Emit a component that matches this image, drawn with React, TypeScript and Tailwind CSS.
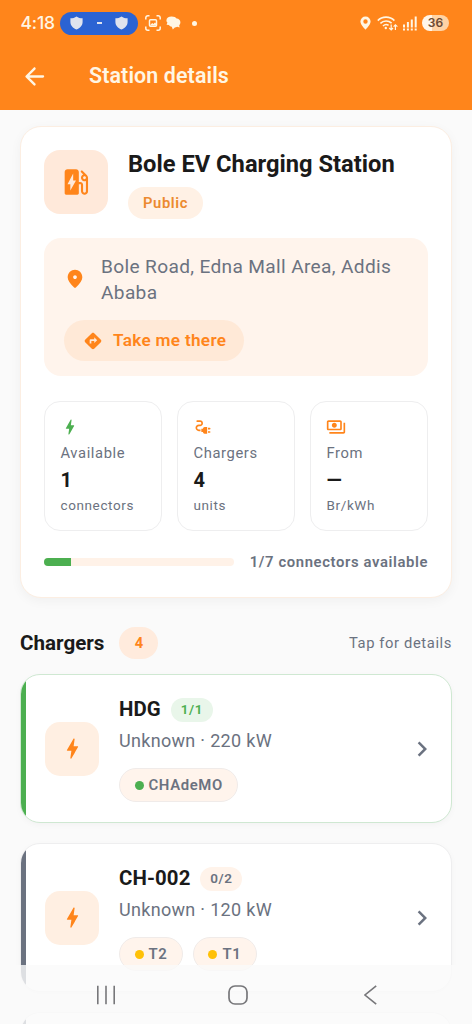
import type { ReactNode } from "react";
import { MdChevronRight, MdDirections, MdElectricalServices, MdOutlinePayments } from "react-icons/md";

type Connector = { name: string; dot: string };

type Charger = {
  name: string;
  free: string;
  info: string;
  active: boolean;
  connectors: Connector[];
};

const chargers: Charger[] = [
  {
    name: "HDG",
    free: "1/1",
    info: "Unknown · 220 kW",
    active: true,
    connectors: [{ name: "CHAdeMO", dot: "bg-[#4caf50]" }],
  },
  {
    name: "CH-002",
    free: "0/2",
    info: "Unknown · 120 kW",
    active: false,
    connectors: [
      { name: "T2", dot: "bg-[#ffc107]" },
      { name: "T1", dot: "bg-[#ffc107]" },
    ],
  },
];

// Rounded Material glyphs, on the usual 24px grid
const glyphs = {
  back: "M19 11H7.83l4.88-4.88c.39-.39.39-1.03 0-1.42-.39-.39-1.02-.39-1.41 0l-6.59 6.59c-.39.39-.39 1.02 0 1.41l6.59 6.59c.39.39 1.02.39 1.41 0 .39-.39.39-1.02 0-1.41L7.83 13H19c.55 0 1-.45 1-1s-.45-1-1-1z",
  bolt: "M10.67 21c-.35 0-.62-.31-.57-.66L11 14H7.5c-.88 0-.33-.75-.31-.78 1.26-2.23 3.15-5.53 5.65-9.93.1-.18.3-.29.5-.29.35 0 .63.31.57.66L13.01 10h3.51c.4 0 .62.19.4.66-3.29 5.74-5.2 9.09-5.75 10.05-.1.18-.29.29-.5.29z",
  station:
    "M19.77 7.23l.01-.01-3.19-3.19c-.29-.29-.77-.29-1.06 0-.29.29-.29.77 0 1.06l1.58 1.58c-1.05.4-1.76 1.47-1.58 2.71.16 1.1 1.1 1.99 2.2 2.11.47.05.88-.03 1.27-.2v7.21c0 .55-.45 1-1 1s-1-.45-1-1V14c0-1.1-.9-2-2-2h-1V5c0-1.1-.9-2-2-2H6c-1.1 0-2 .9-2 2v15c0 .55.45 1 1 1h8c.55 0 1-.45 1-1v-6.5h1.5v4.86c0 1.31.94 2.5 2.24 2.63 1.5.15 2.76-1.02 2.76-2.49V9c0-.69-.28-1.32-.73-1.77zM18 10c-.55 0-1-.45-1-1s.45-1 1-1 1 .45 1 1-.45 1-1 1zM8 18v-4.5H6L10 6v5h2l-4 7z",
  pin: "M12 2c-4.2 0-8 3.22-8 8.2 0 3.18 2.45 6.92 7.34 11.23.38.33.95.33 1.33 0C17.55 17.12 20 13.38 20 10.2 20 5.22 16.2 2 12 2zm0 10c-1.1 0-2-.9-2-2s.9-2 2-2 2 .9 2 2-.9 2-2 2z",
};

function Glyph({ name, size, className }: { name: keyof typeof glyphs; size: number; className?: string }) {
  return (
    <svg width={size} height={size} viewBox="0 0 24 24" fill="currentColor" fillRule="evenodd" className={className}>
      <path d={glyphs[name]} />
    </svg>
  );
}

function Shield() {
  return (
    <svg width="13" height="14" viewBox="0 0 13 14" fill="#dfe3ee">
      <path d="M6.5 0.4C8.2 1.7 10.2 2.2 12.6 2.3V6C12.6 9.6 10 12.2 6.5 13.6C3 12.2 0.4 9.6 0.4 6V2.3C2.8 2.2 4.8 1.7 6.5 0.4Z" />
    </svg>
  );
}

function StatusBar() {
  return (
    <div className="flex h-[46px] items-center pl-[20.5px] pr-[23px] text-[#fff6e4]">
      <span className="w-[39.5px] whitespace-nowrap font-['Inter'] text-[17.5px] font-medium leading-5 tracking-[-0.2px]">
        4:18
      </span>
      <div className="flex h-[23px] w-[78px] items-center justify-between rounded-full bg-[#2b63d3] px-[10px]">
        <Shield />
        <span className="h-[1.5px] w-[5px] bg-[#dfe3ee]" />
        <Shield />
      </div>
      <svg className="ml-[7px]" width="16" height="16" viewBox="0 0 16 16" fill="none" stroke="currentColor" strokeWidth="1.5">
        <path d="M0.8 4.5V2.8a2 2 0 0 1 2-2H4.5M11.5 0.8h1.7a2 2 0 0 1 2 2V4.5M15.2 11.5v1.7a2 2 0 0 1-2 2H11.5M4.5 15.2H2.8a2 2 0 0 1-2-2V11.5" />
        <rect x="4.5" y="4.8" width="7" height="6.4" rx="1" />
        <path d="M5 10.3L7.2 8L8.4 9L10 7.6L11 8.6V10.6H5Z" fill="currentColor" stroke="none" />
      </svg>
      <svg className="ml-[5px]" width="15" height="14" viewBox="0 0 15 14" fill="currentColor">
        <path d="M5.6 0.4C8.2 0.4 9.8 1.3 10.6 2.6C12.8 2.8 14.4 4.2 14.4 6.2C14.4 7.6 13.8 8.4 13.2 9.2L13.6 11.6L11.2 10.8C10.4 11.2 9.6 11.4 8.8 11.4L6.8 13.6L5.8 10.8C4.6 10.6 3.6 10 3 9L0.6 8.8L1.4 6.6C0.8 6 0.4 5.2 0.4 4.4C0.4 2 2.6 0.4 5.6 0.4Z" />
      </svg>
      <span className="ml-[11px] size-[5px] rounded-full bg-current" />

      <div className="ml-auto flex items-center">
        <svg width="11" height="14" viewBox="0 0 11 14" fill="currentColor" fillRule="evenodd">
          <path d="M5.5 0.4A5.1 5.1 0 0 0 0.4 5.5C0.4 9 5.5 13.6 5.5 13.6S10.6 9 10.6 5.5A5.1 5.1 0 0 0 5.5 0.4ZM5.5 3.3A2.2 2.2 0 1 1 5.5 7.7A2.2 2.2 0 0 1 5.5 3.3Z" />
        </svg>
        <svg className="ml-[6px]" width="21" height="15" viewBox="0 0 21 15" fill="none" stroke="currentColor" strokeWidth="1.6">
          <path d="M0.8 4.6C5.2 0 12.8 0 17.4 4.6M3.4 7.4C6.6 4.2 11.4 4.2 14.6 7.2M6 10C7.8 8.2 10 8.2 11.6 9.4" />
          <circle cx="8.8" cy="12" r="1.2" fill="currentColor" stroke="none" />
          <path d="M14.2 8.4V13.8M12.2 12L14.2 14L16 12M18.4 14V8.8M16.6 10.6L18.4 8.8L20.4 10.6" strokeWidth="1.2" />
        </svg>
        <svg className="ml-[5px]" width="14" height="15" viewBox="0 0 14 15" fill="currentColor">
          <path d="M0 8.5h2v3h-2zM3.9 6h2v5.5h-2zM7.8 3.5h2v8h-2zM11.7 0.5h2v11h-2zM0 12.6h2v2h-2zM3.9 12.6h2v2h-2zM7.8 12.6h2v2h-2zM11.7 12.6h2v2h-2z" />
        </svg>
        <span className="ml-[5px] flex h-4 w-[27px] items-center justify-center rounded-full bg-[linear-gradient(90deg,#fff6ea_36%,#ffd3a5_36%)] font-['Inter'] text-[12px] font-semibold leading-4 text-[#6b4a35]">
          36
        </span>
      </div>
    </div>
  );
}

function StatCard({ icon, label, value, unit }: { icon: ReactNode; label: string; value: string; unit: string }) {
  return (
    <div className="h-[130px] rounded-2xl border border-[#eeeeef] bg-white pl-[15.5px] pt-[15px]">
      <div className="h-[22px]">{icon}</div>
      <p className="h-[28px] text-[14.75px] leading-[28px] tracking-[0.61px] text-[#6b7280]">{label}</p>
      <p className="h-[25px] text-[20px] font-bold leading-[27px] text-[#1a1a1a]">{value}</p>
      <p className="text-[13.5px] leading-[26px] tracking-[0.61px] text-[#6b7280]">{unit}</p>
    </div>
  );
}

function ChargerCard({ charger }: { charger: Charger }) {
  const { name, free, info, active, connectors } = charger;
  return (
    <div
      className={`relative flex h-[149px] shrink-0 items-center overflow-hidden rounded-[20px] border bg-white pl-[24px] pr-[14px] shadow-[0_2px_6px_rgba(0,0,0,0.03)] ${
        active ? "border-[#cfe8d2]" : "border-[#eeeeef]"
      }`}
    >
      <span className={`absolute -left-px inset-y-0 w-[6px] ${active ? "bg-[#4caf50]" : "bg-[#6b7280]"}`} />
      <div className="flex size-[54px] items-center justify-center rounded-[15px] bg-[#ffefe2]">
        <Glyph name="bolt" size={27} className="text-[#ff851b]" />
      </div>
      <div className="ml-5 flex h-full flex-1 flex-col pt-[22px]">
        <div className="flex h-6 items-center gap-[10px]">
          <span className="text-[20.4px] font-bold leading-6 tracking-[0.1px] text-[#1a1a1a]">{name}</span>
          <span
            className={`mt-px flex h-6 w-[42px] items-center justify-center rounded-full text-[13.5px] font-semibold tracking-[0.61px] ${
              active ? "bg-[#e9f6ea] text-[#4caf50]" : "bg-[#fff3ea] text-[#6b7280]"
            }`}
          >
            {free}
          </span>
        </div>
        <p className="mt-[7px] h-[26px] text-[18px] leading-[26px] tracking-[0.31px] text-[#6b7280]">{info}</p>
        <div className="mt-[14px] flex gap-[10px]">
          {connectors.map((c) => (
            <span
              key={c.name}
              className="flex h-[34px] items-center rounded-full border border-[#f0ebe9] bg-[#fff4ec] px-[14.5px] text-[14.9px] font-semibold tracking-[0.61px] text-[#6b7280]"
            >
              <i className={`mr-[5px] size-[9px] rounded-full ${c.dot}`} />
              {c.name}
            </span>
          ))}
        </div>
      </div>
      <MdChevronRight size={30} className="text-[#6b7280]" />
    </div>
  );
}

export default function App() {
  return (
    <div className="relative flex h-[1024px] w-[472px] flex-col overflow-hidden bg-[#fafafa] font-['Roboto',sans-serif]">
      <header className="h-[110px] shrink-0 bg-[#ff851b]">
        <StatusBar />
        <div className="flex h-[60px] items-center pl-5 text-[#fff6e4]">
          <Glyph name="back" size={29} />
          <h1 className="ml-10 text-[21.4px] font-semibold tracking-[0.12px]">Station details</h1>
        </div>
      </header>

      <main className="flex flex-col px-5 pt-4">
        <section className="h-[472px] shrink-0 rounded-[21px] border border-[#fceee2] bg-white px-[23px] pt-[23px] shadow-[0_3px_12px_rgba(0,0,0,0.045)]">
          <div className="flex gap-5">
            <div className="flex size-16 items-center justify-center rounded-2xl bg-[#ffe9da]">
              <Glyph name="station" size={34} className="text-[#ff851b]" />
            </div>
            <div>
              <h2 className="h-[37px] whitespace-nowrap text-[23.7px] font-bold leading-[28px] text-[#1a1a1a]">
                Bole EV Charging Station
              </h2>
              <span className="flex h-8 w-[75px] items-center justify-center rounded-full bg-[#fff1e5] text-[14.75px] font-semibold tracking-[0.61px] text-[#ec8a2f]">
                Public
              </span>
            </div>
          </div>

          <div className="mt-[19px] h-[138px] rounded-[17px] bg-[#fff4ec] pl-5 pt-4">
            <div className="flex items-center gap-[15px]">
              <Glyph name="pin" size={22} className="mb-[2px] text-[#ff851b]" />
              <p className="w-[305px] text-[19.1px] leading-[26px] tracking-[0.35px] text-[#6b7280]">
                Bole Road, Edna Mall Area, Addis Ababa
              </p>
            </div>
            <button className="mt-[14px] flex h-[41px] w-[180px] items-center rounded-full bg-[#ffe9d7] pl-[19px] text-[17.2px] font-semibold tracking-[0.3px] text-[#ff851b]">
              <MdDirections size={20} />
              <span className="ml-[10px] whitespace-nowrap">Take me there</span>
            </button>
          </div>

          <div className="mt-[25px] grid grid-cols-3 gap-[15px]">
            <StatCard icon={<Glyph name="bolt" size={20} className="-ml-px text-[#4caf50]" />} label="Available" value="1" unit="connectors" />
            <StatCard icon={<MdElectricalServices size={20} className="-ml-px text-[#ff851b]" />} label="Chargers" value="4" unit="units" />
            <StatCard icon={<MdOutlinePayments size={20} className="-ml-px text-[#ff851b]" />} label="From" value="—" unit="Br/kWh" />
          </div>

          <div className="mt-[21px] flex h-5 items-center justify-between">
            <div className="h-2 w-[190px] overflow-hidden rounded-full bg-[#fff2e8]">
              <div className="h-full w-[27px] bg-[#4caf50]" />
            </div>
            <span className="whitespace-nowrap text-[14.85px] font-semibold tracking-[0.61px] text-[#6b7280]">
              1/7 connectors available
            </span>
          </div>
        </section>

        <div className="mt-[29px] flex h-8 shrink-0 items-center">
          <h3 className="text-[20.6px] font-bold text-[#1a1a1a]">Chargers</h3>
          <span className="ml-[15px] flex h-8 w-[39px] items-center justify-center rounded-full bg-[#ffebdd] text-[14.75px] font-bold text-[#ff851b]">
            4
          </span>
          <span className="ml-auto pt-px text-[14.75px] tracking-[0.61px] text-[#6b7280]">Tap for details</span>
        </div>

        <div className="mt-[15px] flex flex-col gap-5">
          {chargers.map((charger) => (
            <ChargerCard key={charger.name} charger={charger} />
          ))}
          {/* top edge of the next card in the list */}
          <div className="h-10 overflow-hidden rounded-t-[20px] border border-b-0 border-[#eeeeef] bg-white">
            <div className="-ml-px h-full w-[6px] bg-[#6b7280]" />
          </div>
        </div>
      </main>

      {/* system navigation overlays the scrolling list */}
      <nav className="absolute inset-x-0 bottom-0 h-[59px] bg-[#fafafa]/80 text-[#77777a]">
        <div className="flex h-full items-center pl-[96px]">
          <svg width="20" height="20" viewBox="0 0 20 20" stroke="currentColor" strokeWidth="1.6">
            <path d="M1.8 0.8V19.2M10 0.8V19.2M18.2 0.8V19.2" />
          </svg>
          <svg className="ml-[112px]" width="20" height="20" viewBox="0 0 20 20" fill="none" stroke="currentColor" strokeWidth="1.7">
            <rect x="1" y="1" width="18" height="18" rx="6" />
          </svg>
          <svg className="ml-[116px]" width="13" height="20" viewBox="0 0 13 20" fill="none" stroke="currentColor" strokeWidth="1.6">
            <path d="M12.2 0.8L1 10L12.2 19.2" />
          </svg>
        </div>
      </nav>
    </div>
  );
}
